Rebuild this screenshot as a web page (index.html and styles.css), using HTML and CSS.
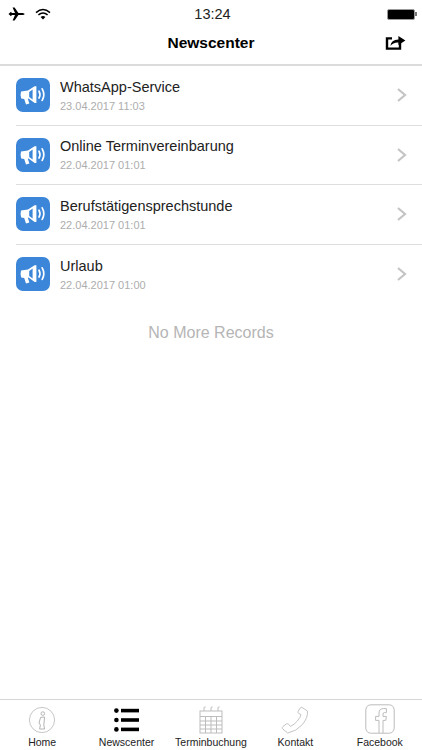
FILE: index.html
```html
<!DOCTYPE html>
<html lang="de">
  <head>
    <meta charset="UTF-8" />
    <meta name="viewport" content="width=device-width, initial-scale=1.0" />
    <title>Newscenter</title>
    <link rel="stylesheet" href="styles.css">
  </head>
  <body>
    <svg class="defs" width="0" height="0">
      <symbol id="megaphone" viewBox="0 0 34 34">
        <path d="M5 13.5 L12 12.6 L18.6 8.2 L20.4 8.2 L20.4 25 L18.6 25 L12.6 20.6 L11.8 20.7 L13.4 25.6 L10 26.4 L8.2 21 L5.2 20.6 Q4 17 5 13.5 Z" fill="#fff"/>
        <path d="M16.6 11.6 L16.6 21.4 L13.2 19 L13.2 14 Z" fill="#3b86d8"/>
        <path d="M23 13.2 Q25 16.6 23 20" fill="none" stroke="#fff" stroke-width="1.7" stroke-linecap="round"/>
        <path d="M26.2 10.8 Q29.4 16.6 26.2 22.4" fill="none" stroke="#fff" stroke-width="1.7" stroke-linecap="round"/>
      </symbol>
      <symbol id="chevron" viewBox="0 0 12 16">
        <path d="M2 2 L9 8 L2 14" fill="none" stroke="#c4c4c4" stroke-width="2.2"/>
      </symbol>
    </svg>

    <div class="status-bar">
      <div class="status-left">
        <svg width="17" height="14" viewBox="0 0 17 14">
          <path d="M0.5 7 L3 4.8 L3.8 6 L7 6 L4.6 0.6 L6.6 0.6 L10.4 6 L14.6 6 Q16.6 6.4 16.6 7 Q16.6 7.8 14.6 8 L10.4 8 L6.6 13.4 L4.6 13.4 L7 8 L3.8 8 L3 9.2 Z" fill="#000"/>
        </svg>
        <svg width="16" height="12" viewBox="0 0 16 12">
          <path d="M1 4.6 Q8 -1.4 15 4.6" fill="none" stroke="#000" stroke-width="1.4"/>
          <path d="M3.4 6.9 Q8 3 12.6 6.9" fill="none" stroke="#000" stroke-width="1.4"/>
          <path d="M5.6 9 Q8 7 10.4 9 L8 11.4 Z" fill="#000"/>
        </svg>
      </div>
      <span class="status-time">13:24</span>
      <div class="battery"><span class="battery-fill"></span><span class="battery-tip"></span></div>
    </div>

    <div class="nav-bar">
      <span class="nav-spacer"></span>
      <h1>Newscenter</h1>
      <svg class="share" width="21" height="17" viewBox="0 0 21 17">
        <path d="M15 7 L15 14.6 L2 14.6 L2 4.4 L7 4.4" fill="none" stroke="#000" stroke-width="2.4"/>
        <path d="M5.4 12 Q6 6 13.4 5.6 L13.4 2 L20.4 6.6 L13.4 11 L13.4 8.4 Q8 8.2 5.4 12 Z" fill="#000"/>
      </svg>
    </div>

    <ul class="news-list">
      <li class="news-row">
        <svg class="news-icon"><use href="#megaphone"/></svg>
        <div class="news-text">
          <span class="news-title">WhatsApp-Service</span>
          <span class="news-date">23.04.2017 11:03</span>
        </div>
        <svg class="chevron"><use href="#chevron"/></svg>
      </li>
      <li class="news-row">
        <svg class="news-icon"><use href="#megaphone"/></svg>
        <div class="news-text">
          <span class="news-title">Online Terminvereinbarung</span>
          <span class="news-date">22.04.2017 01:01</span>
        </div>
        <svg class="chevron"><use href="#chevron"/></svg>
      </li>
      <li class="news-row">
        <svg class="news-icon"><use href="#megaphone"/></svg>
        <div class="news-text">
          <span class="news-title">Berufstätigensprechstunde</span>
          <span class="news-date">22.04.2017 01:01</span>
        </div>
        <svg class="chevron"><use href="#chevron"/></svg>
      </li>
      <li class="news-row">
        <svg class="news-icon"><use href="#megaphone"/></svg>
        <div class="news-text">
          <span class="news-title">Urlaub</span>
          <span class="news-date">22.04.2017 01:00</span>
        </div>
        <svg class="chevron"><use href="#chevron"/></svg>
      </li>
    </ul>

    <p class="no-more">No More Records</p>

    <div class="tab-bar">
      <div class="tab">
        <svg width="28" height="28" viewBox="0 0 28 28">
          <circle cx="14" cy="14" r="12.6" fill="none" stroke="#c8c8c8" stroke-width="1"/>
          <circle cx="14.8" cy="7.6" r="1.8" fill="none" stroke="#b4b4b4" stroke-width="1"/>
          <path d="M12.6 11.4 L16.6 11 L15.8 19 L16.6 23 L11.6 23 L12.4 19 L11 17 Z" fill="none" stroke="#b4b4b4" stroke-width="1"/>
        </svg>
        <span>Home</span>
      </div>
      <div class="tab">
        <svg width="28" height="28" viewBox="0 0 28 28">
          <circle cx="3.4" cy="4.6" r="2.3" fill="#000"/>
          <rect x="8" y="2.8" width="18" height="3.6" fill="#000"/>
          <circle cx="3.4" cy="14" r="2.3" fill="#000"/>
          <rect x="8" y="12.2" width="18" height="3.6" fill="#000"/>
          <circle cx="3.4" cy="23.4" r="2.3" fill="#000"/>
          <rect x="8" y="21.6" width="18" height="3.6" fill="#000"/>
        </svg>
        <span>Newscenter</span>
      </div>
      <div class="tab">
        <svg width="28" height="28" viewBox="0 0 28 28" fill="none" stroke="#bdbdbd" stroke-width="1">
          <rect x="3" y="5" width="22" height="22"/>
          <path d="M3 10.5 H25 M3 15 H25 M3 19 H25 M3 23 H25 M8.5 10.5 V27 M14 10.5 V27 M19.5 10.5 V27"/>
          <path d="M7 5 V2 Q7 0.6 8.6 1 M14 5 V2 Q14 0.6 15.6 1 M21 5 V2 Q21 0.6 22.6 1"/>
        </svg>
        <span>Terminbuchung</span>
      </div>
      <div class="tab">
        <svg width="28" height="28" viewBox="0 0 28 28">
          <path d="M21 1.4 L26.4 5 Q27.4 11 21.4 18.6 Q15 25.6 6.6 27 L1.4 22.6 Q1 21.4 2 20.4 L5.6 17.8 Q7 17.4 7.8 18.4 L9.4 20.4 Q13.4 18.6 16.4 15 Q19.4 11.4 20 8.6 L17.6 7.4 Q16.6 6.4 17.2 5.2 L19.4 1.8 Q20 1 21 1.4 Z" fill="none" stroke="#c4c4c4" stroke-width="1"/>
        </svg>
        <span>Kontakt</span>
      </div>
      <div class="tab">
        <svg width="30" height="30" viewBox="0 0 30 30">
          <rect x="0.8" y="0.8" width="28.4" height="28.4" rx="5" fill="none" stroke="#bcbcbc" stroke-width="1"/>
          <path d="M14 29 V16.4 H10.6 V12.4 H14 V9 Q14 4.6 18.6 4.6 H21.4 V8.6 H19.4 Q18 8.6 18 10 V12.4 H21.4 L20.8 16.4 H18 V29" fill="none" stroke="#bcbcbc" stroke-width="1"/>
        </svg>
        <span>Facebook</span>
      </div>
    </div>
  </body>
</html>
```

FILE: styles.css
```css
* {
  box-sizing: border-box;
  margin: 0;
  padding: 0;
  font-family: "Liberation Sans", Arial, sans-serif;
}

body {
  display: flex;
  flex-direction: column;
  width: 422px;
  height: 750px;
  overflow: hidden;
  background-color: #fff;
  color: #000;
}

.defs {
  position: absolute;
}

.status-bar {
  display: flex;
  align-items: center;
  justify-content: space-between;
  height: 27px;
  padding: 1px 5px 0 8px;
}

.status-left {
  display: flex;
  align-items: center;
  gap: 10px;
  width: 120px;
}

.status-time {
  font-size: 14.5px;
  color: #222;
}

.battery {
  display: flex;
  align-items: center;
  justify-content: flex-end;
  width: 120px;
}

.battery-fill {
  width: 28px;
  height: 11px;
  background-color: #000;
  border: 1px solid #999;
  border-radius: 2px;
}

.battery-tip {
  width: 2px;
  height: 4px;
  background-color: #777;
}

.nav-bar {
  display: flex;
  align-items: center;
  justify-content: space-between;
  height: 39px;
  padding: 0 16px 6px 16px;
  border-bottom: 2px solid #dcdcdc;
}

.nav-bar h1 {
  font-size: 15.5px;
  font-weight: bold;
}

.nav-spacer {
  width: 21px;
}

.news-list {
  list-style: none;
}

.news-row {
  display: flex;
  align-items: center;
  height: 59.5px;
  margin-left: 16px;
  padding-right: 14px;
  border-bottom: 1px solid #dedede;
}

.news-row:last-child {
  border-bottom: none;
}

.news-icon {
  flex-shrink: 0;
  width: 34px;
  height: 34px;
  margin-right: 10px;
  background-color: #3b86d8;
  border-radius: 7px;
}

.news-text {
  display: flex;
  flex-direction: column;
  flex: 1;
  gap: 5px;
}

.news-title {
  font-size: 14.5px;
  color: #222;
}

.news-date {
  font-size: 11px;
  color: #adadad;
}

.chevron {
  width: 12px;
  height: 16px;
}

.no-more {
  margin-top: 20px;
  font-size: 16px;
  text-align: center;
  color: #b5b5b5;
}

.tab-bar {
  display: grid;
  grid-template-columns: repeat(5, 1fr);
  height: 51px;
  margin-top: auto;
  border-top: 1px solid #d6d6d6;
}

.tab {
  display: flex;
  flex-direction: column;
  align-items: center;
  justify-content: flex-end;
  gap: 2px;
  padding-bottom: 2px;
  font-size: 10.5px;
  color: #222;
}
```
